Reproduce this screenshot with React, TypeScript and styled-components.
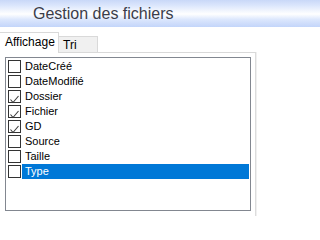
import React, { useState } from "react";
import styled, { createGlobalStyle } from "styled-components";

const GlobalStyle = createGlobalStyle`
  body {
    margin: 0;
    background: #ffffff;
    font-family: "Liberation Sans", Arial, sans-serif;
  }
`;

const items = [
  { name: "DateCréé", checked: false },
  { name: "DateModifié", checked: false },
  { name: "Dossier", checked: true },
  { name: "Fichier", checked: true },
  { name: "GD", checked: true },
  { name: "Source", checked: false },
  { name: "Taille", checked: false },
  { name: "Type", checked: false },
];

const StyledWindow = styled.div`
  width: 100%;
  min-width: 262px;
  height: 216px;
  overflow: hidden;
  background: #ffffff;
`;

const StyledHeader = styled.div`
  height: 27px;
  background: linear-gradient(#c9d8f8 0%, #dbe6fc 20%, #ffffff 52%, #dce7fd 72%, #c3d5fa 100%);
  display: flex;
  align-items: center;
  padding-left: 33px;
  box-sizing: border-box;
`;

const StyledTitle = styled.span`
  color: #3b3d4a;
  font-size: 16px;
  line-height: 27px;
  margin-top: -1px;
`;

const StyledTabStrip = styled.div`
  display: flex;
  align-items: flex-end;
  height: 20px;
  margin-top: 6px;
  margin-bottom: -1px;
  position: relative;
  z-index: 1;
`;

const StyledTab = styled.div<{ $active?: boolean }>`
  box-sizing: border-box;
  height: ${(p) => (p.$active ? "21px" : "17px")};
  width: ${(p) => (p.$active ? "59px" : "39px")};
  background: ${(p) => (p.$active ? "#ffffff" : "#f0f0f0")};
  border-top: 1px solid #d9d9d9;
  border-right: 1px solid #d9d9d9;
  border-bottom: ${(p) => (p.$active ? "none" : "1px solid #d9d9d9")};
  color: #000000;
  font-size: 12px;
  padding-left: ${(p) => (p.$active ? "5px" : "4px")};
  line-height: ${(p) => (p.$active ? "18px" : "16px")};
  cursor: default;
`;

const StyledPanel = styled.div`
  width: 256px;
  height: 170px;
  box-sizing: border-box;
  border-top: 1px solid #d9d9d9;
  border-right: 1px solid #dcdcdc;
  box-shadow: 1px 0 0 #f0f0f0;
  padding: 4px 0 0 5px;
`;

const StyledList = styled.div`
  width: 246px;
  height: 154px;
  box-sizing: border-box;
  border: 1px solid #828790;
  padding-top: 1px;
  background: #ffffff;
`;

const StyledRow = styled.div`
  display: flex;
  height: 15px;
  padding-left: 2px;
  cursor: default;
`;

const StyledBox = styled.div`
  width: 13px;
  height: 13px;
  box-sizing: border-box;
  border: 1px solid #333333;
  margin-top: 1px;
  background: #ffffff;
  flex-shrink: 0;
`;

const StyledLabel = styled.div<{ $selected?: boolean }>`
  flex: 1;
  margin-left: 1px;
  margin-right: 1px;
  padding-left: 3px;
  font-size: 11px;
  line-height: 15px;
  color: ${(p) => (p.$selected ? "#ffffff" : "#000000")};
  background: ${(p) => (p.$selected ? "#0078d7" : "transparent")};
  white-space: nowrap;
`;

function App() {
  const [selected, setSelected] = useState("Type");

  return (
    <StyledWindow>
      <GlobalStyle />
      <StyledHeader>
        <StyledTitle>Gestion des fichiers</StyledTitle>
      </StyledHeader>
      <StyledTabStrip>
        <StyledTab $active>Affichage</StyledTab>
        <StyledTab>Tri</StyledTab>
      </StyledTabStrip>
      <StyledPanel>
        <StyledList>
          {items.map((item) => (
            <StyledRow key={item.name} onClick={() => setSelected(item.name)}>
              <StyledBox>
                {item.checked ? (
                  <svg width="11" height="11" viewBox="0 0 11 11">
                    <path d="M1.5 5.5 L4 8.5 L9.5 2" fill="none" stroke="#3a3a3a" strokeWidth="1.1" />
                  </svg>
                ) : null}
              </StyledBox>
              <StyledLabel $selected={selected === item.name}>{item.name}</StyledLabel>
            </StyledRow>
          ))}
        </StyledList>
      </StyledPanel>
    </StyledWindow>
  );
}

export default App;
